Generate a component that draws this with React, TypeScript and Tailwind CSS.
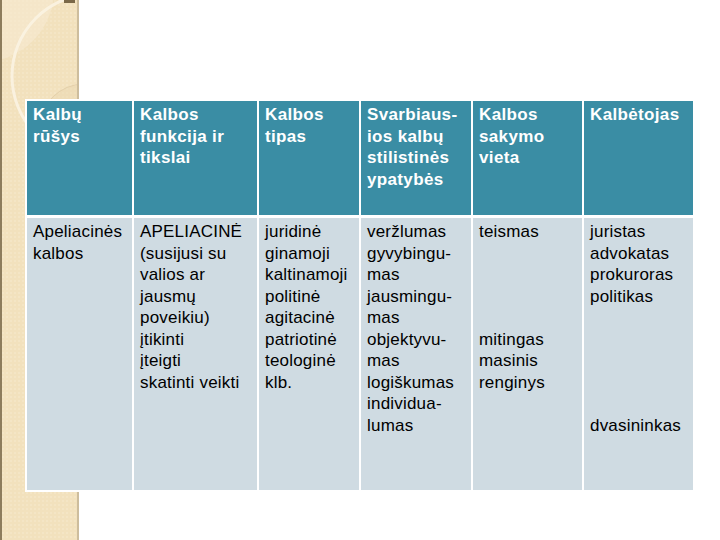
const HEAD = [
  ["Kalbų", "rūšys"],
  ["Kalbos", "funkcija ir", "tikslai"],
  ["Kalbos", "tipas"],
  ["Svarbiaus-", "ios kalbų", "stilistinės", "ypatybės"],
  ["Kalbos", "sakymo", "vieta"],
  ["Kalbėtojas"],
];

const BODY = [
  ["Apeliacinės", "kalbos"],
  [
    "APELIACINĖ",
    "(susijusi su",
    "valios ar",
    "jausmų",
    "poveikiu)",
    "įtikinti",
    "įteigti",
    "skatinti veikti",
  ],
  [
    "juridinė",
    "ginamoji",
    "kaltinamoji",
    "politinė",
    "agitacinė",
    "patriotinė",
    "teologinė",
    "klb.",
  ],
  [
    "veržlumas",
    "gyvybingu-",
    "mas",
    "jausmingu-",
    "mas",
    "objektyvu-",
    "mas",
    "logiškumas",
    "individua-",
    "lumas",
  ],
  ["teismas", "", "", "", "", "mitingas", "masinis", "renginys"],
  ["juristas", "advokatas", "prokuroras", "politikas", "", "", "", "", "", "dvasininkas"],
];

function SideStrip() {
  // decorative tan band on the slide's left edge
  return (
    <div className="absolute left-0 top-0 h-[540px] w-[79px] border-l-2 border-r-2 border-l-[#8d7c5c] border-r-[#cdbd9d] bg-[#f2e1bd]">
      <svg width="75" height="540" className="block">
        <defs>
          <pattern id="dots" width="4" height="4" patternUnits="userSpaceOnUse">
            <rect width="2" height="2" fill="#ffffff" opacity="0.12" />
          </pattern>
        </defs>
        <rect width="75" height="540" fill="url(#dots)" />
        <circle cx="-20" cy="-10" r="72" fill="#f7ead0" opacity="0.6" />
        <circle cx="92" cy="76" r="82" fill="none" stroke="#fbf3e2" strokeWidth="3" opacity="0.9" />
        <circle cx="82" cy="128" r="44" fill="#e9d6b0" opacity="0.45" />
        <circle cx="82" cy="128" r="44" fill="none" stroke="#dcc7a0" strokeWidth="1" opacity="0.6" />
        <rect x="62" y="0" width="11" height="3" fill="#7a6848" />
      </svg>
    </div>
  );
}

export default function App() {
  return (
    <div
      className="relative h-[540px] w-[720px] overflow-hidden bg-white"
      style={{ fontFamily: '"Liberation Sans", Arial, sans-serif' }}
    >
      <SideStrip />

      <div className="relative pl-[25px] pt-[99px]">
        <div className="grid w-fit grid-cols-[105px_123px_100px_110px_109px_109px] grid-rows-[114px_272px] gap-x-[2px] gap-y-[3px] bg-white p-[2px]">
          {HEAD.map((lines, i) => (
            <div
              key={"h" + i}
              className="bg-[#3a8da4] pl-[6px] pt-[3px] text-[17px] font-bold leading-[21.5px] tracking-[0.35px] text-white"
            >
              {lines.map((t, j) => (
                <div key={j} className="whitespace-nowrap">
                  {t}
                </div>
              ))}
            </div>
          ))}
          {BODY.map((lines, i) => (
            <div
              key={"b" + i}
              className="bg-[#cfdbe2] pl-[6px] pt-[3px] text-[17px] leading-[21.5px] tracking-[0.2px] text-black"
            >
              {lines.map((t, j) => (
                <div key={j} className="h-[21.5px] whitespace-nowrap">
                  {t}
                </div>
              ))}
            </div>
          ))}
        </div>
      </div>
    </div>
  );
}
